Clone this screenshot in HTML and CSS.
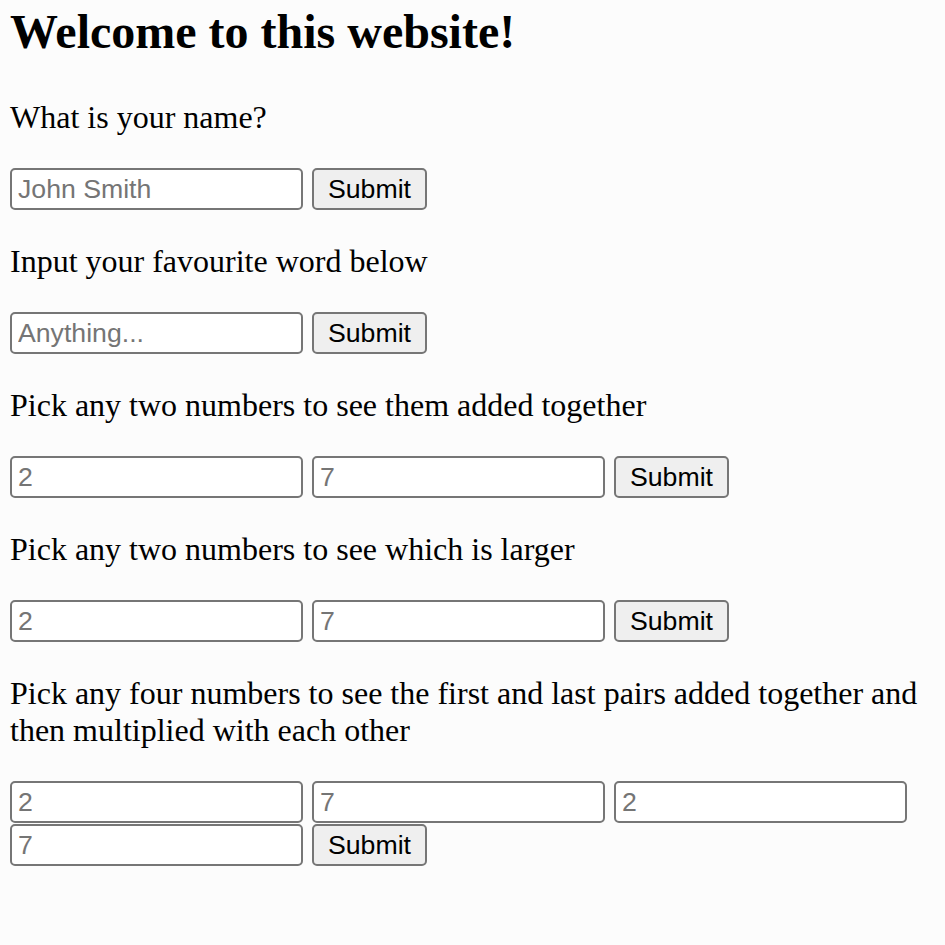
FILE: index.html
```html
<!DOCTYPE html>
<html lang="en">
<head>
<meta charset="utf-8">
<title>Welcome</title>
<link rel="stylesheet" href="styles.css">
</head>
<body>
<main class="page">
  <h2 class="title">Welcome to this website!</h2>

  <p class="prompt">What is your name?</p>
  <form class="row">
    <input class="field" type="text" placeholder="John Smith">
    <button class="btn" type="button">Submit</button>
  </form>

  <p class="prompt">Input your favourite word below</p>
  <form class="row">
    <input class="field" type="text" placeholder="Anything...">
    <button class="btn" type="button">Submit</button>
  </form>

  <p class="prompt">Pick any two numbers to see them added together</p>
  <form class="row">
    <input class="field" type="number" placeholder="2">
    <input class="field" type="number" placeholder="7">
    <button class="btn" type="button">Submit</button>
  </form>

  <p class="prompt">Pick any two numbers to see which is larger</p>
  <form class="row">
    <input class="field" type="number" placeholder="2">
    <input class="field" type="number" placeholder="7">
    <button class="btn" type="button">Submit</button>
  </form>

  <p class="prompt">Pick any four numbers to see the first and last pairs added together and then multiplied with each other</p>
  <form class="row">
    <input class="field" type="number" placeholder="2">
    <input class="field" type="number" placeholder="7">
    <input class="field" type="number" placeholder="2">
    <input class="field" type="number" placeholder="7">
    <button class="btn" type="button">Submit</button>
  </form>
</main>
</body>
</html>
```

FILE: styles.css
```css
html, body {
  margin: 0;
  padding: 0;
  background: #fcfcfc;
}

.page {
  padding: 4px 20px 0 10px;
  font-family: "Liberation Serif", "Times New Roman", serif;
  font-size: 32px;
  line-height: 37px;
  color: #000;
}

.title {
  margin: 0 0 40px 0;
  font-size: 48px;
  line-height: 55px;
  font-weight: bold;
}

.prompt {
  margin: 0 0 32px 0;
}

.row {
  display: flex;
  flex-wrap: wrap;
  column-gap: 9px;
  row-gap: 0;
  margin: 0 0 32px 0;
}

.field,
.btn {
  box-sizing: border-box;
  height: 42px;
  margin: 0 0 1px 0;
  font-family: "Liberation Sans", Arial, sans-serif;
  font-size: 26.67px;
  border: 2px solid #767676;
  border-radius: 5px;
}

.field {
  width: 293px;
  padding: 0 6px;
  background: #fff;
  color: #000;
  -moz-appearance: textfield;
  appearance: textfield;
}

.field::-webkit-outer-spin-button,
.field::-webkit-inner-spin-button {
  -webkit-appearance: none;
  margin: 0;
}

.field::placeholder {
  color: #757575;
}

.btn {
  width: 115px;
  padding: 0 10px;
  background: #efefef;
  color: #000;
}
```
